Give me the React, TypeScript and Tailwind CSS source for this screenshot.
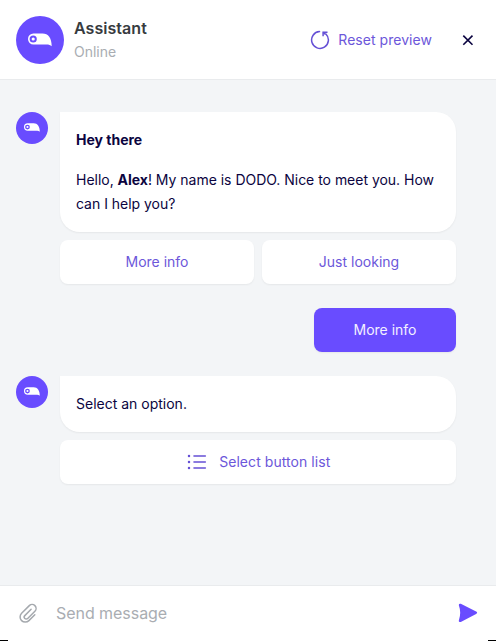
import type { ReactNode } from "react";

function Beak({ className }: { className: string }) {
  return (
    <svg viewBox="0 0 24 14" className={className} fill="none">
      <path
        d="M5.5.5H14.5C20.3.5 23.6 5 23.7 13.2 22.4 12 20.8 11.5 18.4 11.5H5.5A5.5 5.5 0 0 1 5.5.5Z"
        fill="#fff"
      />
      <circle cx="5.2" cy="6" r="2.6" stroke="#694cff" strokeWidth="2" />
    </svg>
  );
}

function Avatar() {
  return (
    <div className="flex size-8 shrink-0 items-center justify-center rounded-full bg-[#694cff]">
      <Beak className="h-[9.4px] w-4" />
    </div>
  );
}

function Bubble({ children }: { children: ReactNode }) {
  return (
    <div className="rounded-[20px] rounded-tl-none bg-white p-4 leading-6 text-[#0b0440] shadow-[0_1px_2px_rgba(0,0,0,0.06)]">
      {children}
    </div>
  );
}

function Choice({ children }: { children: ReactNode }) {
  return (
    <button className="flex h-11 flex-1 items-center justify-center rounded-lg bg-white text-[#6c57da] shadow-[0_1px_2px_rgba(0,0,0,0.06)]">
      {children}
    </button>
  );
}

function ListIcon() {
  return (
    <svg viewBox="0 0 20 16" className="mr-3 h-4 w-5" stroke="#6550d5" strokeLinecap="round">
      <path d="M7 2h11.3M7 8h11.3M7 14h11.3" strokeWidth="1.6" />
      <path d="M2 2h.01M2 8h.01M2 14h.01" strokeWidth="2.5" />
    </svg>
  );
}

export default function App() {
  return (
    <div className="h-[641px] w-[496px] bg-black font-['Inter',sans-serif] text-sm">
      <div className="flex h-[640px] flex-col bg-[#f3f5f7]">
        <header className="flex h-20 shrink-0 items-center border-b border-[#e9ebed] bg-white px-4">
          <div className="flex size-12 items-center justify-center rounded-full bg-[#694cff]">
            <Beak className="h-3.5 w-6" />
          </div>
          <div className="ml-2.5">
            <div className="text-base font-semibold leading-6 tracking-[0.05px] text-[#373b40]">Assistant</div>
            <div className="leading-6 text-[#a9adb2]">Online</div>
          </div>
          <button className="ml-auto flex items-center gap-2 text-[#6c57da]">
            <svg viewBox="0 0 20 20" className="size-5" fill="none" stroke="#6550d5" strokeWidth="1.5">
              <path d="M9.5 1.6A8.4 8.4 0 1 0 15.9 4" strokeLinecap="round" />
              <path d="M13.1 6.3V2.2H17.5" />
              <path d="M13.3 2.4L15.5 4.5" />
            </svg>
            <span className="tracking-[0.04px]">Reset preview</span>
          </button>
          <button className="ml-[30px] mr-1.5" aria-label="Close">
            <svg viewBox="0 0 12 12" className="size-3" stroke="#0b0440" strokeWidth="1.6">
              <path d="M1.3 1.6l9.2 9.2M10.5 1.6l-9.2 9.2" />
            </svg>
          </button>
        </header>

        <main className="flex flex-1 flex-col gap-6 pl-4 pr-10 pt-8">
          <section className="flex gap-3">
            <Avatar />
            <div className="flex flex-1 flex-col gap-2">
              <Bubble>
                <p className="mb-4 font-bold">Hey there</p>
                <p className="tracking-[-0.02px]">
                  Hello, <b>Alex</b>! My name is DODO. Nice to meet you. How can I help you?
                </p>
              </Bubble>
              <div className="flex gap-2">
                <Choice>More info</Choice>
                <Choice>Just looking</Choice>
              </div>
            </div>
          </section>

          <div className="flex h-11 w-[142px] items-center justify-center self-end rounded-lg bg-[#694cff] text-[#f3f0ff] shadow-[0_1px_2px_rgba(0,0,0,0.06)]">
            More info
          </div>

          <section className="flex gap-3">
            <Avatar />
            <div className="flex flex-1 flex-col gap-2">
              <Bubble>Select an option.</Bubble>
              <div className="flex">
                <Choice>
                  <span className="flex items-center pl-[1.5px]">
                    <ListIcon />
                    <span className="tracking-[0.06px]">Select button list</span>
                  </span>
                </Choice>
              </div>
            </div>
          </section>
        </main>

        <footer className="flex h-[55px] shrink-0 items-center border-t border-[#e9ebed] bg-white px-4">
          <svg viewBox="0 0 24 24" className="size-6" fill="none" stroke="#a5a9ae" strokeWidth="1.5" strokeLinecap="round" strokeLinejoin="round">
            <path d="M18.8 13.7l-5.9 5.9a5.15 5.15 0 0 1-7.3-7.3l7.7-7.7a3.95 3.95 0 0 1 5.6 5.6l-7.2 7.3a2.05 2.05 0 0 1-2.9-2.9l6.3-6.4" />
          </svg>
          <span className="ml-4 text-base tracking-[-0.05px] text-[#a9adb2]">Send message</span>
          <svg viewBox="0 0 20 20" className="ml-auto mr-0.5 size-5" fill="#694cff">
            <path d="M2.8.8L18.1 8.6Q20.2 9.8 18.1 11L2.8 18.9Q.3 19.6.9 17.2Q3.5 9.8.9 2.6Q.4.3 2.8.8Z" />
          </svg>
        </footer>
      </div>
      <div className="mx-2 h-px bg-white" />
    </div>
  );
}
